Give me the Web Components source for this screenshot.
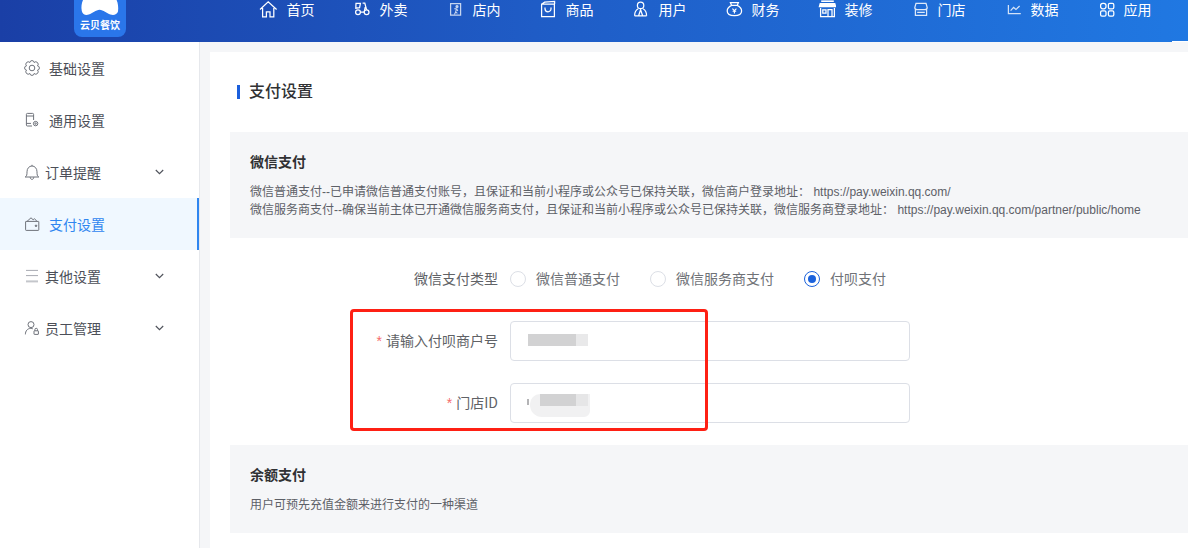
<!DOCTYPE html>
<html lang="zh">
<head>
<meta charset="utf-8">
<title>支付设置</title>
<style>
    html, body { margin: 0; height: 548px; overflow: hidden; background: #f5f6f8; }
    body { font-family: "Liberation Sans", "Noto Sans CJK SC", sans-serif; }
    .p { font-family: "Noto Sans CJK TC", sans-serif; line-height: 0; }
</style>
</head>
<body>

<app-shell>
    <top-bar slot="top">
        <nav-item label="首页"><svg viewBox="0 0 20 20"><path d="M2 9.500 10.200 1.800 18.600 9.500M4.600 8v8.800h3.800v-5h3.600v5h3.800V8"/></svg></nav-item>
        <nav-item label="外卖"><svg viewBox="0 0 20 20"><circle cx="7" cy="12.200" r="2.400"/><circle cx="15.600" cy="12.200" r="2.400"/><path d="M5 3.400h4.400l-.8 4.200-3.800.6zM11.600 3.200h2.200l1.800 6.600M9.400 12.200h3.800l1-5"/></svg></nav-item>
        <nav-item label="店内"><svg viewBox="0 0 20 20" opacity=".75"><path d="M16.600 15V3.600H6.600V15h10z"/><circle cx="13" cy="6.600" r="1" fill="#fff"/><path d="M10.400 8.600l2.400.4 1 2M12.400 9.400l-.8 2.600 1.800 1.400M11.400 12.600l-1 1.800" stroke-width="1.100"/></svg></nav-item>
        <nav-item label="商品"><svg viewBox="0 0 20 20"><path d="M4.600 4.200h12.800v12.400H4.600zM17.600 4V1.400l-10 .8-3 2M8 7.400v1.400a3 3 0 0 0 6 0V7.400"/></svg></nav-item>
        <nav-item label="用户"><svg viewBox="0 0 20 20"><circle cx="10.600" cy="5.400" r="3.200"/><path d="M4.600 15.800c0-3.600 1.600-6 3.600-7M16.600 15.800c0-3.600-1.600-6-3.600-7M4.600 15.800h12M8.600 15.800l2-6 2 6"/></svg></nav-item>
        <nav-item label="财务"><svg viewBox="0 0 20 20"><path d="M8.600 5.600 7.400 2.600h8l-1.200 3M8.600 5.400h5.600c2.800 1.400 4.400 3.400 4.400 5.600 0 3-2.600 4.600-7.200 4.600S4.200 14 4.200 11c0-2.200 1.600-4.200 4.400-5.600z"/><path d="M9.400 8.600l2 2 2-2M11.400 10.600v2.800M9.600 11.200h3.600" stroke-width="1.100"/></svg></nav-item>
        <nav-item label="装修"><svg viewBox="0 0 20 20"><path d="M5.200 1.200h12.600" stroke-width="1.600"/><path d="M4.200 3.600h14.600l.8 3H3.400z" fill="#fff"/><path d="M4.600 8v8.600h13.800V8M12 16.600V9.600h4v7M6.800 9.800H10v3.400H6.800z"/></svg></nav-item>
        <nav-item label="门店"><svg viewBox="0 0 20 20"><path d="M7 3.400h10l1.200 4.200c0 1.400-1 2-2.200 2H8c-1.200 0-2.200-.6-2.200-2zM6.400 9.400v6h11.200v-6M8.200 12.400h7.600" stroke-opacity=".85"/></svg></nav-item>
        <nav-item label="数据"><svg viewBox="0 0 20 20"><path d="M6.400 5v8.600h12.400" stroke-opacity=".8"/><path d="M8.600 10.600l3-3.200 2.400 2 3.600-3.400" stroke-opacity=".8"/></svg></nav-item>
        <nav-item label="应用"><svg viewBox="0 0 20 20"><rect x="5.600" y="3.400" width="5.400" height="5.400" rx="2.200"/><rect x="13.400" y="3.400" width="5.400" height="5.400" rx="1.400"/><rect x="5.600" y="10.800" width="5.400" height="5.400" rx="1.400"/><rect x="13.400" y="10.800" width="5.400" height="5.400" rx="1.400"/></svg></nav-item>
    </top-bar>

    <side-menu slot="side">
        <side-item label="基础设置"><svg viewBox="0 0 14 14"><path d="M4.860 1.530A2.150 2.150 0 0 1 9.140 1.530 2.150 2.150 0 0 1 12.470 4.860 2.150 2.150 0 0 1 12.470 9.140 2.150 2.150 0 0 1 9.140 12.470 2.150 2.150 0 0 1 4.860 12.470 2.150 2.150 0 0 1 1.530 9.140 2.150 2.150 0 0 1 1.530 4.860 2.150 2.150 0 0 1 4.860 1.530z"/><circle cx="7" cy="7" r="2.800"/></svg></side-item>
        <side-item label="通用设置"><svg viewBox="0 0 14 14"><path d="M7 13H2.400a1 1 0 0 1-1-1V1.400a1 1 0 0 1 1-1h5.200a1 1 0 0 1 1 1V7M1.400 3h7.200M1.400 10.400H6"/><circle cx="10.600" cy="10.600" r="2.200"/><circle cx="10.600" cy="10.600" r=".7"/></svg></side-item>
        <side-item label="订单提醒" sub><svg viewBox="0 0 14 14"><path d="M.2 12c1.600-.8 1.800-2.200 1.800-5.200C2 3.400 4.200 1 7 1s5 2.400 5 5.800c0 3 .2 4.400 1.800 5.200zM7 1V-.2M5.200 12.200c0 1.200.8 2.200 1.800 2.200s1.800-1 1.800-2.200"/></svg></side-item>
        <side-item label="支付设置" active><svg viewBox="0 0 14 14"><path d="M1 4.400h12.400a.4.4 0 0 1 .4.400v8a.6.6 0 0 1-.6.6H1.200a.6.6 0 0 1-.6-.6V4.800a.4.4 0 0 1 .4-.4zM2 4.400 6 .8l2.200 2L9.400 1.600l2.600 2.800"/><circle cx="11" cy="8.800" r=".8" fill="#7d8189"/></svg></side-item>
        <side-item label="其他设置" sub><svg viewBox="0 0 14 14"><path d="M1 1.400h12M1 6.600h12" stroke="#a8abb2"/><path d="M1 12.400h12" stroke="#c4c6cb" stroke-width="2"/></svg></side-item>
        <side-item label="员工管理" sub><svg viewBox="0 0 14 14"><circle cx="6" cy="3.600" r="3"/><path d="M.4 13.400c0-3.400 2-6 5.400-6 .8 0 1.400.2 2 .4"/><rect x="9" y="9.800" width="4.400" height="3.600" rx=".4"/><path d="M9.900 9.800V8.600a1.300 1.300 0 0 1 2.600 0v1.200"/></svg></side-item>
    </side-menu>

    <pay-card>
        <note-box heading="微信支付">
            <div>微信普通支付--已申请微信普通支付账号<span class="p">，</span>且保证和当前小程序或公众号已保持关联<span class="p">，</span>微信商户登录地址<span class="p">：</span> https://pay.weixin.qq.com/</div>
            <div>微信服务商支付--确保当前主体已开通微信服务商支付<span class="p">，</span>且保证和当前小程序或公众号已保持关联<span class="p">，</span>微信服务商登录地址<span class="p">：</span> https://pay.weixin.qq.com/partner/public/home</div>
        </note-box>

        <form-row label="微信支付类型" slot="form">
            <radio-opt label="微信普通支付"></radio-opt>
            <radio-opt label="微信服务商支付"></radio-opt>
            <radio-opt label="付呗支付" checked></radio-opt>
        </form-row>
        <form-row label="请输入付呗商户号" required slot="form"><text-field></text-field></form-row>
        <form-row label="门店ID" required slot="form"><text-field smudge></text-field></form-row>

        <note-box heading="余额支付" slot="after">
            <div>用户可预先充值金额来进行支付的一种渠道</div>
        </note-box>
    </pay-card>
</app-shell>

<script>
const define = (name, css, html) => {
    customElements.define(name, class extends HTMLElement {
        constructor() {
            super();
            this.attachShadow({ mode: 'open' });
        }
        connectedCallback() {
            this.shadowRoot.innerHTML = `<style>${css}</style>${typeof html === 'function' ? html(this) : html}`;
        }
    });
};

define('app-shell', `
    :host { display: flex; flex-direction: column; position: relative; width: 1188px; height: 548px; overflow: hidden; }
    .body { display: flex; flex: 1; min-height: 0; }
    main { flex: 1; min-width: 0; padding: 10px 0 0 10px; }
    .mark {
        position: absolute; left: 350px; top: 309px; width: 352px; height: 116px;
        border: 3px solid #fe2014; border-radius: 4px;
    }
    .corner { position: absolute; left: 1172px; top: 41px; width: 16px; height: 1px; background: #fff; }
`, `
    <slot name="top"></slot>
    <div class="body">
        <slot name="side"></slot>
        <main><slot></slot></main>
    </div>
    <div class="mark"></div>
    <div class="corner"></div>
`);

define('top-bar', `
    :host {
        display: flex; height: 42px; box-sizing: border-box; padding-left: 74px;
        background: linear-gradient(90deg, #1a3fa6 0%, #1f5cc6 45%, #2078e2 100%);
        overflow: hidden;
    }
    .logo {
        width: 52px; height: 37px; flex: none; position: relative;
        background: #2a76ea; border-radius: 0 0 8px 8px;
        color: #fff; font: bold 10px/10px "Noto Sans CJK SC", sans-serif;
        display: flex; align-items: flex-end; justify-content: center; padding-bottom: 7px; box-sizing: border-box;
    }
    .logo svg { position: absolute; left: 0; top: 0; width: 52px; height: 16px; }
    nav { display: flex; margin-left: 132px; }
`, `
    <div class="logo">
        <svg viewBox="0 0 52 16"><path d="M9 0C7.600 3 7 7 7.800 11c.8 3.600 3.800 4.600 7 3.600 3.800-1.200 7-4.600 10.800-4.800 3.800.2 7 3.600 10.800 4.800 3 .8 6.600.4 7.600-3C44.600 7.600 44 3 42.600 0z" fill="#fff"/></svg>
        云贝餐饮
    </div>
    <nav><slot></slot></nav>
`);

define('nav-item', `
    :host {
        display: flex; width: 93px; height: 20px; gap: 8.500px; align-items: center;
        color: #fff; font: 14px/20px "Noto Sans CJK SC", sans-serif;
    }
    span { padding-bottom: 2px; }
    ::slotted(svg) {
        width: 20px; height: 20px; flex: none; fill: none; stroke: #fff; stroke-width: 1.250;
    }
`, el => `<slot></slot><span>${el.getAttribute('label')}</span>`);

define('side-menu', `
    :host { display: block; width: 199px; flex: none; background: #fff; border-right: 1px solid #e6e8ec; }
`, `<slot></slot>`);

define('side-item', `
    :host {
        display: flex; align-items: center; height: 52px; box-sizing: border-box; padding: 0 35px 0 25px;
        color: #4c4f58; font: 14px/20px "Noto Sans CJK SC", sans-serif;
        gap: 10px; position: relative;
    }
    :host([sub]) { gap: 6px; }
    :host([active]) { background: #f0f8ff; color: #2f86f0; border-right: 2px solid #2f86f0; padding-right: 33px; }
    ::slotted(svg) { width: 14px; height: 14px; flex: none; fill: none; stroke: #6f737b; stroke-width: 1; overflow: visible; }
    .arrow { width: 9px; height: 6px; margin-left: auto; fill: none; stroke: #50535c; stroke-width: 1.200; }
`, el => `
    <slot></slot><span>${el.getAttribute('label')}</span>
    ${el.hasAttribute('sub') ? '<svg class="arrow" viewBox="0 0 9 6"><path d="M.8 1 4.500 4.600 8.200 1"/></svg>' : ''}
`);

define('pay-card', `
    :host { display: block; background: #fff; height: 100%; padding: 28px 0 0 20px; box-sizing: border-box; }
    h2 {
        margin: 0 0 30px 7px; padding-left: 12px; height: 22px; position: relative;
        color: #303133; font: 500 16px/20px "Noto Sans CJK SC", sans-serif;
    }
    h2::before { content: ""; position: absolute; left: 0; top: 5px; width: 3px; height: 14px; background: #1b5fdc; }
    .form { display: flex; flex-direction: column; gap: 22px; margin: 21px 0 22px; }
`, `
    <h2>支付设置</h2>
    <slot></slot>
    <div class="form"><slot name="form"></slot></div>
    <slot name="after"></slot>
`);

define('note-box', `
    :host {
        display: block; background: #f5f6f8; padding: 19px 20px; color: #5d6067;
        font: 12px/18px "Liberation Sans", "Noto Sans CJK SC", sans-serif;
    }
    h3 { margin: 0 0 12px; color: #303133; font: 600 14px/20px "Noto Sans CJK SC", sans-serif; }
`, el => `<h3>${el.getAttribute('heading')}</h3><slot></slot>`);

define('form-row', `
    :host {
        display: flex; align-items: center; min-height: 40px;
        color: #606266; font: 14px/20px "Noto Sans CJK SC", sans-serif;
    }
    .label { width: 280px; flex: none; text-align: right; padding: 0 12px 2px 0; box-sizing: border-box; }
    .star { color: #f56c6c; margin-right: 4px; font-family: "Liberation Sans", sans-serif; }
    .control { display: flex; gap: 30px; align-items: center; }
`, el => `
    <div class="label">${el.hasAttribute('required') ? '<span class="star">*</span>' : ''}${el.getAttribute('label')}</div>
    <div class="control"><slot></slot></div>
`);

define('radio-opt', `
    :host { display: flex; align-items: center; gap: 10px; color: #6f7277; }
    span { padding-bottom: 2px; }
    i { width: 16px; height: 16px; box-sizing: border-box; border: 1px solid #dcdfe6; border-radius: 50%; background: #fff; position: relative; }
    :host([checked]) i { border-color: #1b62dc; }
    :host([checked]) i::after {
        content: ""; position: absolute; left: 3px; top: 3px; width: 8px; height: 8px;
        border-radius: 50%; background: #1b62dc;
    }
`, el => `<i></i><span>${el.getAttribute('label')}</span>`);

define('text-field', `
    :host {
        display: block; width: 400px; height: 40px; box-sizing: border-box; position: relative;
        border: 1px solid #dcdfe6; border-radius: 4px; background: #fff;
    }
    div { position: absolute; }
    .a { left: 17px; top: 12px; width: 48px; height: 12px; background: #d2d2d3; }
    .b { left: 65px; top: 12px; width: 12px; height: 12px; background: #e9e9ea; }
    .blob { left: 19px; top: 10px; width: 60px; height: 23px; background: #f1f1f2; border-radius: 10px 0 6px 12px; }
    .a2 { left: 29px; top: 10px; width: 36px; height: 12px; background: #d2d2d3; }
    .b2 { left: 65px; top: 10px; width: 12px; height: 12px; background: #e6e6e7; }
    .one { left: 16px; top: 15px; width: 2px; height: 6px; background: #b4b4b6; }
`, el => el.hasAttribute('smudge')
    ? `<div class="blob"></div><div class="a2"></div><div class="b2"></div><div class="one"></div>`
    : `<div class="a"></div><div class="b"></div>`);
</script>
</body>
</html>
